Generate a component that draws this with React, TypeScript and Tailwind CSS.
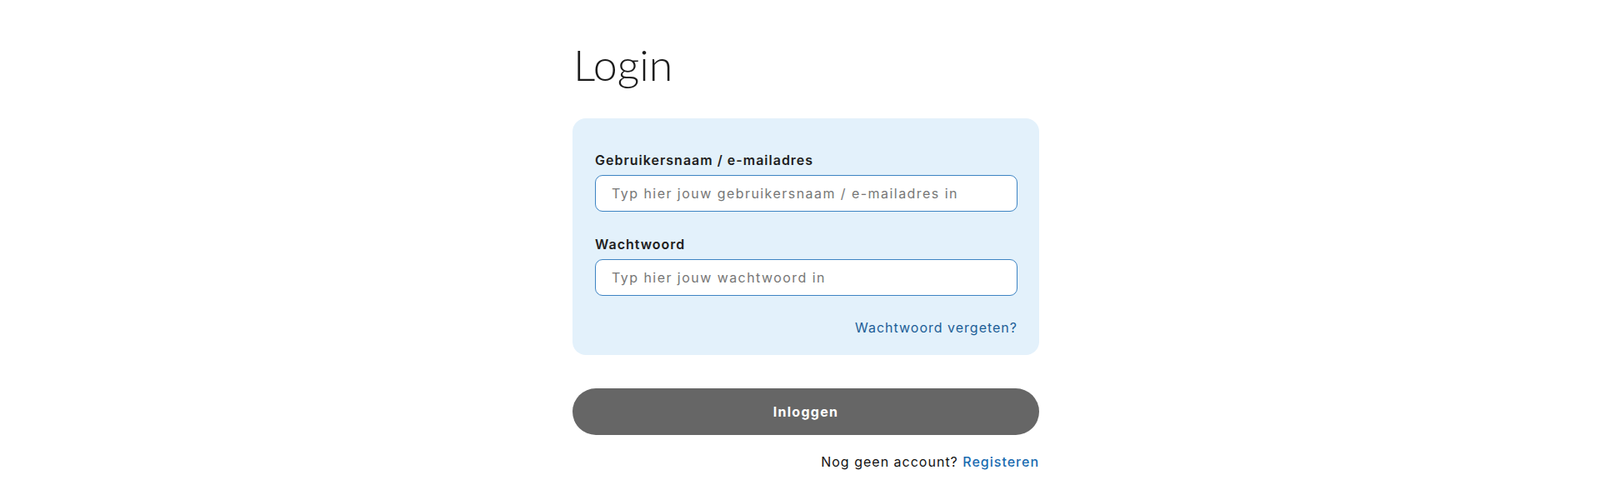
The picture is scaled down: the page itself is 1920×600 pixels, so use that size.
import React from "react";

export default function App() {
  return (
    <div className="min-h-[600px] w-full bg-white pl-[14px]" style={{ fontFamily: "Inter, 'Noto Sans', sans-serif" }}>
      <div className="mx-auto w-[560px] pt-[51px]">
        <h1 className="pl-[1px] text-[52px] leading-[53px] font-light text-[#1b1b1b]" style={{ fontFamily: "Lato, Inter, sans-serif" }}>Login</h1>
        <div className="mt-[38px] rounded-[16px] bg-[#e3f1fb] pl-[27px] pr-[26px] pt-[38px] pb-[21px]">
          <label className="block text-[16px] leading-[24px] font-semibold tracking-[1px] text-[#1e1e1e]">Gebruikersnaam / e-mailadres</label>
          <input
            className="mt-[6px] block h-[44px] w-full rounded-[9px] border border-[#3d84c3] bg-white px-[19px] text-[16px] tracking-[1.45px] text-[#333] placeholder:text-[#777] outline-none"
            placeholder="Typ hier jouw gebruikersnaam / e-mailadres in"
          />
          <label className="mt-[27px] block text-[16px] leading-[24px] font-semibold tracking-[1px] text-[#1e1e1e]">Wachtwoord</label>
          <input
            type="password"
            className="mt-[6px] block h-[44px] w-full rounded-[9px] border border-[#3d84c3] bg-white px-[19px] text-[16px] tracking-[1.45px] text-[#333] placeholder:text-[#777] outline-none"
            placeholder="Typ hier jouw wachtwoord in"
          />
          <div className="mt-[26px] flex justify-end">
            <a className="text-[16px] leading-[24px] tracking-[1px] text-[#1d5e97]">Wachtwoord vergeten?</a>
          </div>
        </div>
        <button className="mt-[40px] flex h-[56px] w-full items-center justify-center rounded-full bg-[#666666] text-[16px] font-bold tracking-[1.3px] text-white">
          Inloggen
        </button>
        <div className="mt-[20px] flex justify-end text-[16px] leading-[24px] tracking-[1px] text-[#111]">
          <span>Nog geen account?&nbsp;</span>
          <a className="font-medium text-[#1a6bb0]">Registeren</a>
        </div>
      </div>
    </div>
  );
}
